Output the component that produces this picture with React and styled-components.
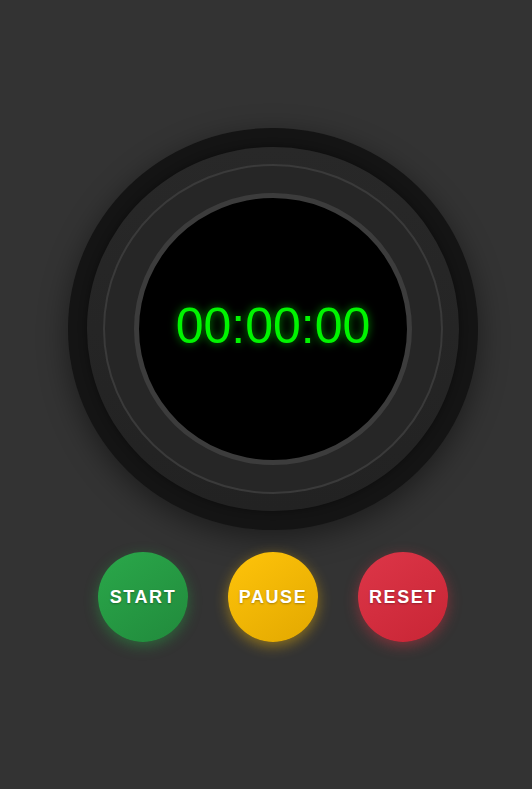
import React from "react";
import styled, { createGlobalStyle } from "styled-components";

const Global = createGlobalStyle`
  html, body { margin: 0; padding: 0; background: #333333; }
  body { font-family: "Liberation Sans", Arial, sans-serif; }
`;

const Page = styled.div`
  box-sizing: border-box;
  min-height: 789px;
  padding: 128px 0 0 14px;
  display: flex;
  flex-direction: column;
  align-items: center;
  gap: 22px;
`;

const Bezel = styled.div`
  width: 410px;
  height: 402px;
  border-radius: 50%;
  background: #141414;
  box-shadow: 0 8px 30px rgba(0, 0, 0, 0.45);
  display: flex;
  align-items: center;
  justify-content: center;
`;

const Ring = styled.div`
  width: 372px;
  height: 364px;
  border-radius: 50%;
  background: linear-gradient(180deg, #282828, #222222);
  box-shadow: 0 0 8px rgba(0, 0, 0, 0.4);
  display: flex;
  align-items: center;
  justify-content: center;
`;

const Groove = styled.div`
  box-sizing: border-box;
  width: 340px;
  height: 330px;
  border-radius: 50%;
  border: 2px solid #3a3a3a;
  background: #262626;
  display: flex;
  align-items: center;
  justify-content: center;
`;

const Face = styled.div`
  box-sizing: border-box;
  width: 278px;
  height: 272px;
  border-radius: 50%;
  border: 5px solid #3c3c3c;
  background: #000;
  display: flex;
  align-items: center;
  justify-content: center;
`;

const Time = styled.div`
  color: #00f500;
  font-family: "Liberation Sans", Arial, sans-serif;
  font-size: 50px;
  line-height: 1;
  margin-top: -6px;
  text-shadow: 0 0 8px rgba(0, 255, 0, 0.6);
`;

const Controls = styled.div`
  display: flex;
  gap: 40px;
`;

const Round = styled.button`
  width: 90px;
  height: 90px;
  border: none;
  border-radius: 50%;
  padding: 0;
  color: #fff;
  font-family: "Liberation Sans", Arial, sans-serif;
  font-weight: bold;
  font-size: 18px;
  letter-spacing: 1.6px;
  text-shadow: 0 1px 2px rgba(0, 0, 0, 0.3);
  background: ${(p) => p.$bg};
  box-shadow: 0 4px 14px ${(p) => p.$glow};
  cursor: pointer;
`;

export default function App() {
  return (
    <>
      <Global />
      <Page>
        <Bezel>
          <Ring>
            <Groove>
              <Face>
                <Time>00:00:00</Time>
              </Face>
            </Groove>
          </Ring>
        </Bezel>
        <Controls>
          <Round $bg="linear-gradient(145deg, #2aa84a, #218a3c)" $glow="rgba(40,167,69,0.45)">START</Round>
          <Round $bg="linear-gradient(145deg, #ffc40a, #e2a800)" $glow="rgba(255,193,7,0.45)">PAUSE</Round>
          <Round $bg="linear-gradient(145deg, #dd3648, #c82535)" $glow="rgba(220,53,69,0.45)">RESET</Round>
        </Controls>
      </Page>
    </>
  );
}
